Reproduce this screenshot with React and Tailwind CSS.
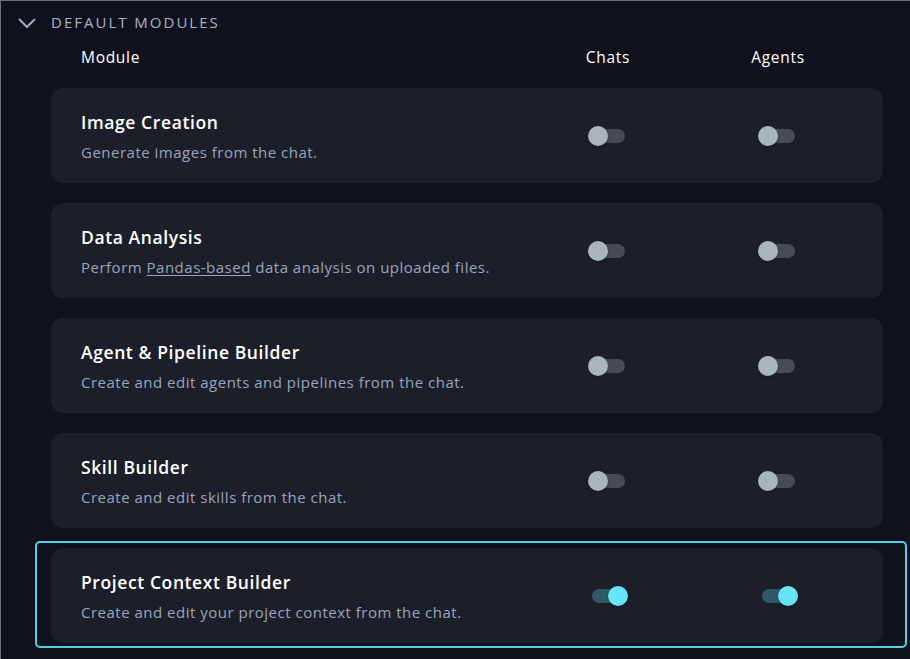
import React, { useState } from "react";

const modules = [
  { id: "image", title: "Image Creation", desc: "Generate images from the chat.", chats: false, agents: false },
  {
    id: "data",
    title: "Data Analysis",
    desc: (
      <>
        Perform <span className="underline underline-offset-2">Pandas-based</span> data analysis on uploaded files.
      </>
    ),
    chats: false,
    agents: false,
  },
  { id: "agent", title: "Agent & Pipeline Builder", desc: "Create and edit agents and pipelines from the chat.", chats: false, agents: false },
  { id: "skill", title: "Skill Builder", desc: "Create and edit skills from the chat.", chats: false, agents: false },
  { id: "context", title: "Project Context Builder", desc: "Create and edit your project context from the chat.", chats: true, agents: true, focused: true },
];

function Switch({ on, onToggle }) {
  return (
    <button
      type="button"
      onClick={onToggle}
      className={
        "relative w-[33px] h-[14px] rounded-full " + (on ? "bg-[#2e5a68]" : "bg-[#474b56]")
      }
    >
      <span
        className={
          "absolute top-1/2 -translate-y-1/2 w-5 h-5 rounded-full shadow-[0_1px_2px_rgba(0,0,0,0.4)] " +
          (on ? "left-[16px] bg-[#67e4f7]" : "left-[-4px] bg-[#a9b4bc]")
        }
      />
    </button>
  );
}

function ModuleCard({ m, state, setState }) {
  const card = (
    <div className="h-[95px] rounded-xl bg-[#1c1f29] flex pl-[30px] pr-[20px]">
      <div className="flex-1 pt-[22px]">
        <div className="text-[17.5px] leading-[24px] font-semibold tracking-[0.6px] text-white">{m.title}</div>
        <div className="mt-[7px] text-[15px] leading-[22px] tracking-[0.5px] text-[#98a5bd]">{m.desc}</div>
      </div>
      <div className="w-[170px] flex items-center justify-center">
        <Switch on={state.chats} onToggle={() => setState({ ...state, chats: !state.chats })} />
      </div>
      <div className="w-[170px] flex items-center justify-center">
        <Switch on={state.agents} onToggle={() => setState({ ...state, agents: !state.agents })} />
      </div>
    </div>
  );
  if (!m.focused) return card;
  return (
    <div className="relative">
      {card}
      <div className="pointer-events-none absolute left-[-16px] right-[-24px] top-[-7px] bottom-[-5px] rounded-[5px] border-2 border-[#55cde2]" />
    </div>
  );
}

export default function App() {
  const [states, setStates] = useState(
    Object.fromEntries(modules.map((m) => [m.id, { chats: m.chats, agents: m.agents }]))
  );
  return (
    <div
      className="h-[659px] overflow-hidden bg-[#0f121c] border-t border-l border-[#6b6f78]"
      style={{ fontFamily: '"Open Sans", "Noto Sans", sans-serif' }}
    >
      <div className="h-[43px] flex items-center pl-[17px]">
        <svg width="18" height="12" viewBox="0 0 18 12" fill="none" className="mr-[15px]">
          <path d="M1.5 2.5 L9 10 L16.5 2.5" stroke="#a3aec0" strokeWidth="2" strokeLinecap="round" strokeLinejoin="round" />
        </svg>
        <span className="text-[15px] font-medium tracking-[2px] uppercase text-[#a6b3c7]">Default modules</span>
      </div>
      <div className="ml-[50px] w-[832px] h-[28px] flex items-center pl-[30px] pr-[20px] text-[15.5px] font-medium tracking-[0.7px] text-white">
        <div className="flex-1">Module</div>
        <div className="w-[170px] text-center">Chats</div>
        <div className="w-[170px] text-center">Agents</div>
      </div>
      <div className="ml-[50px] w-[832px] mt-[16px] flex flex-col gap-[20px]">
        {modules.map((m) => (
          <ModuleCard
            key={m.id}
            m={m}
            state={states[m.id]}
            setState={(s) => setStates({ ...states, [m.id]: s })}
          />
        ))}
      </div>
    </div>
  );
}
